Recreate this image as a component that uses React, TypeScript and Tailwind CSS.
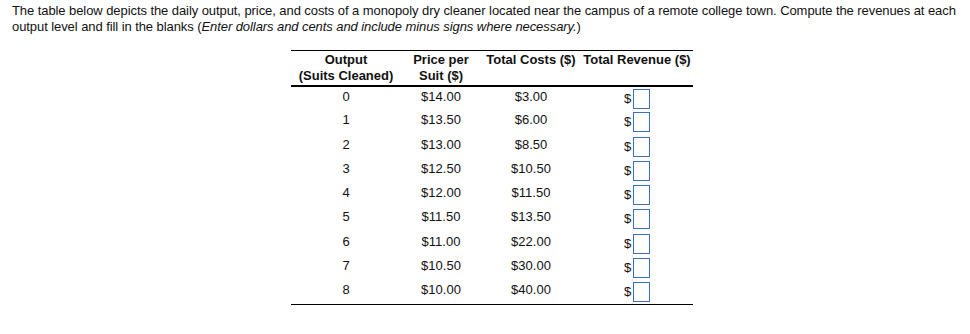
const rows = [
  { q: '0', p: '$14.00', c: '$3.00' },
  { q: '1', p: '$13.50', c: '$6.00' },
  { q: '2', p: '$13.00', c: '$8.50' },
  { q: '3', p: '$12.50', c: '$10.50' },
  { q: '4', p: '$12.00', c: '$11.50' },
  { q: '5', p: '$11.50', c: '$13.50' },
  { q: '6', p: '$11.00', c: '$22.00' },
  { q: '7', p: '$10.50', c: '$30.00' },
  { q: '8', p: '$10.00', c: '$40.00' },
];

export default function App() {
  return (
    <div className="h-[334px] w-[970px] bg-white pl-3 pr-1 pt-[3px] font-['Liberation_Sans',Arial,sans-serif] text-[13px] leading-4 text-[#111]">
      <p className="tracking-[-0.075px]">
        The table below depicts the daily output, price, and costs of a monopoly dry cleaner located near the campus of a
        remote college town. Compute the revenues at each output level and fill in the blanks{' '}
        <span>
          (<i>Enter dollars and cents and include minus signs where necessary.</i>)
        </span>
      </p>

      <div className="mt-[15px] pl-[279px]">
        <table className="table-fixed border-collapse border-t border-b border-black text-[13px] leading-[15px]">
          <thead>
            <tr className="border-b-2 border-black leading-4">
              <th className="w-[110px] px-0 pt-[1px] pb-[1px] align-top font-bold">
                Output
                <br />
                (Suits Cleaned)
              </th>
              <th className="w-[80px] px-0 pt-[1px] pb-[1px] align-top font-bold">
                Price per
                <br />
                Suit ($)
              </th>
              <th className="w-[100px] px-0 pt-[1px] pb-[1px] align-top font-bold">Total Costs ($)</th>
              <th className="w-[112px] px-0 pt-[1px] pb-[1px] align-top font-bold">Total Revenue ($)</th>
            </tr>
          </thead>
          <tbody>
            {rows.map((r) => (
              <tr key={r.q} className="h-[24.25px]">
                <td className="px-0 pt-[2px] text-center align-top">{r.q}</td>
                <td className="px-0 pt-[2px] text-center align-top">{r.p}</td>
                <td className="px-0 pt-[2px] text-center align-top">{r.c}</td>
                <td className="px-0 pt-[2px] align-top">
                  <div className="flex items-start justify-center">
                    <span className="mr-[2px] mt-[2px]">$</span>
                    <span className="inline-block h-5 w-[17px] border border-[#3a6fd1] bg-white" />
                  </div>
                </td>
              </tr>
            ))}
          </tbody>
        </table>
      </div>
    </div>
  );
}
